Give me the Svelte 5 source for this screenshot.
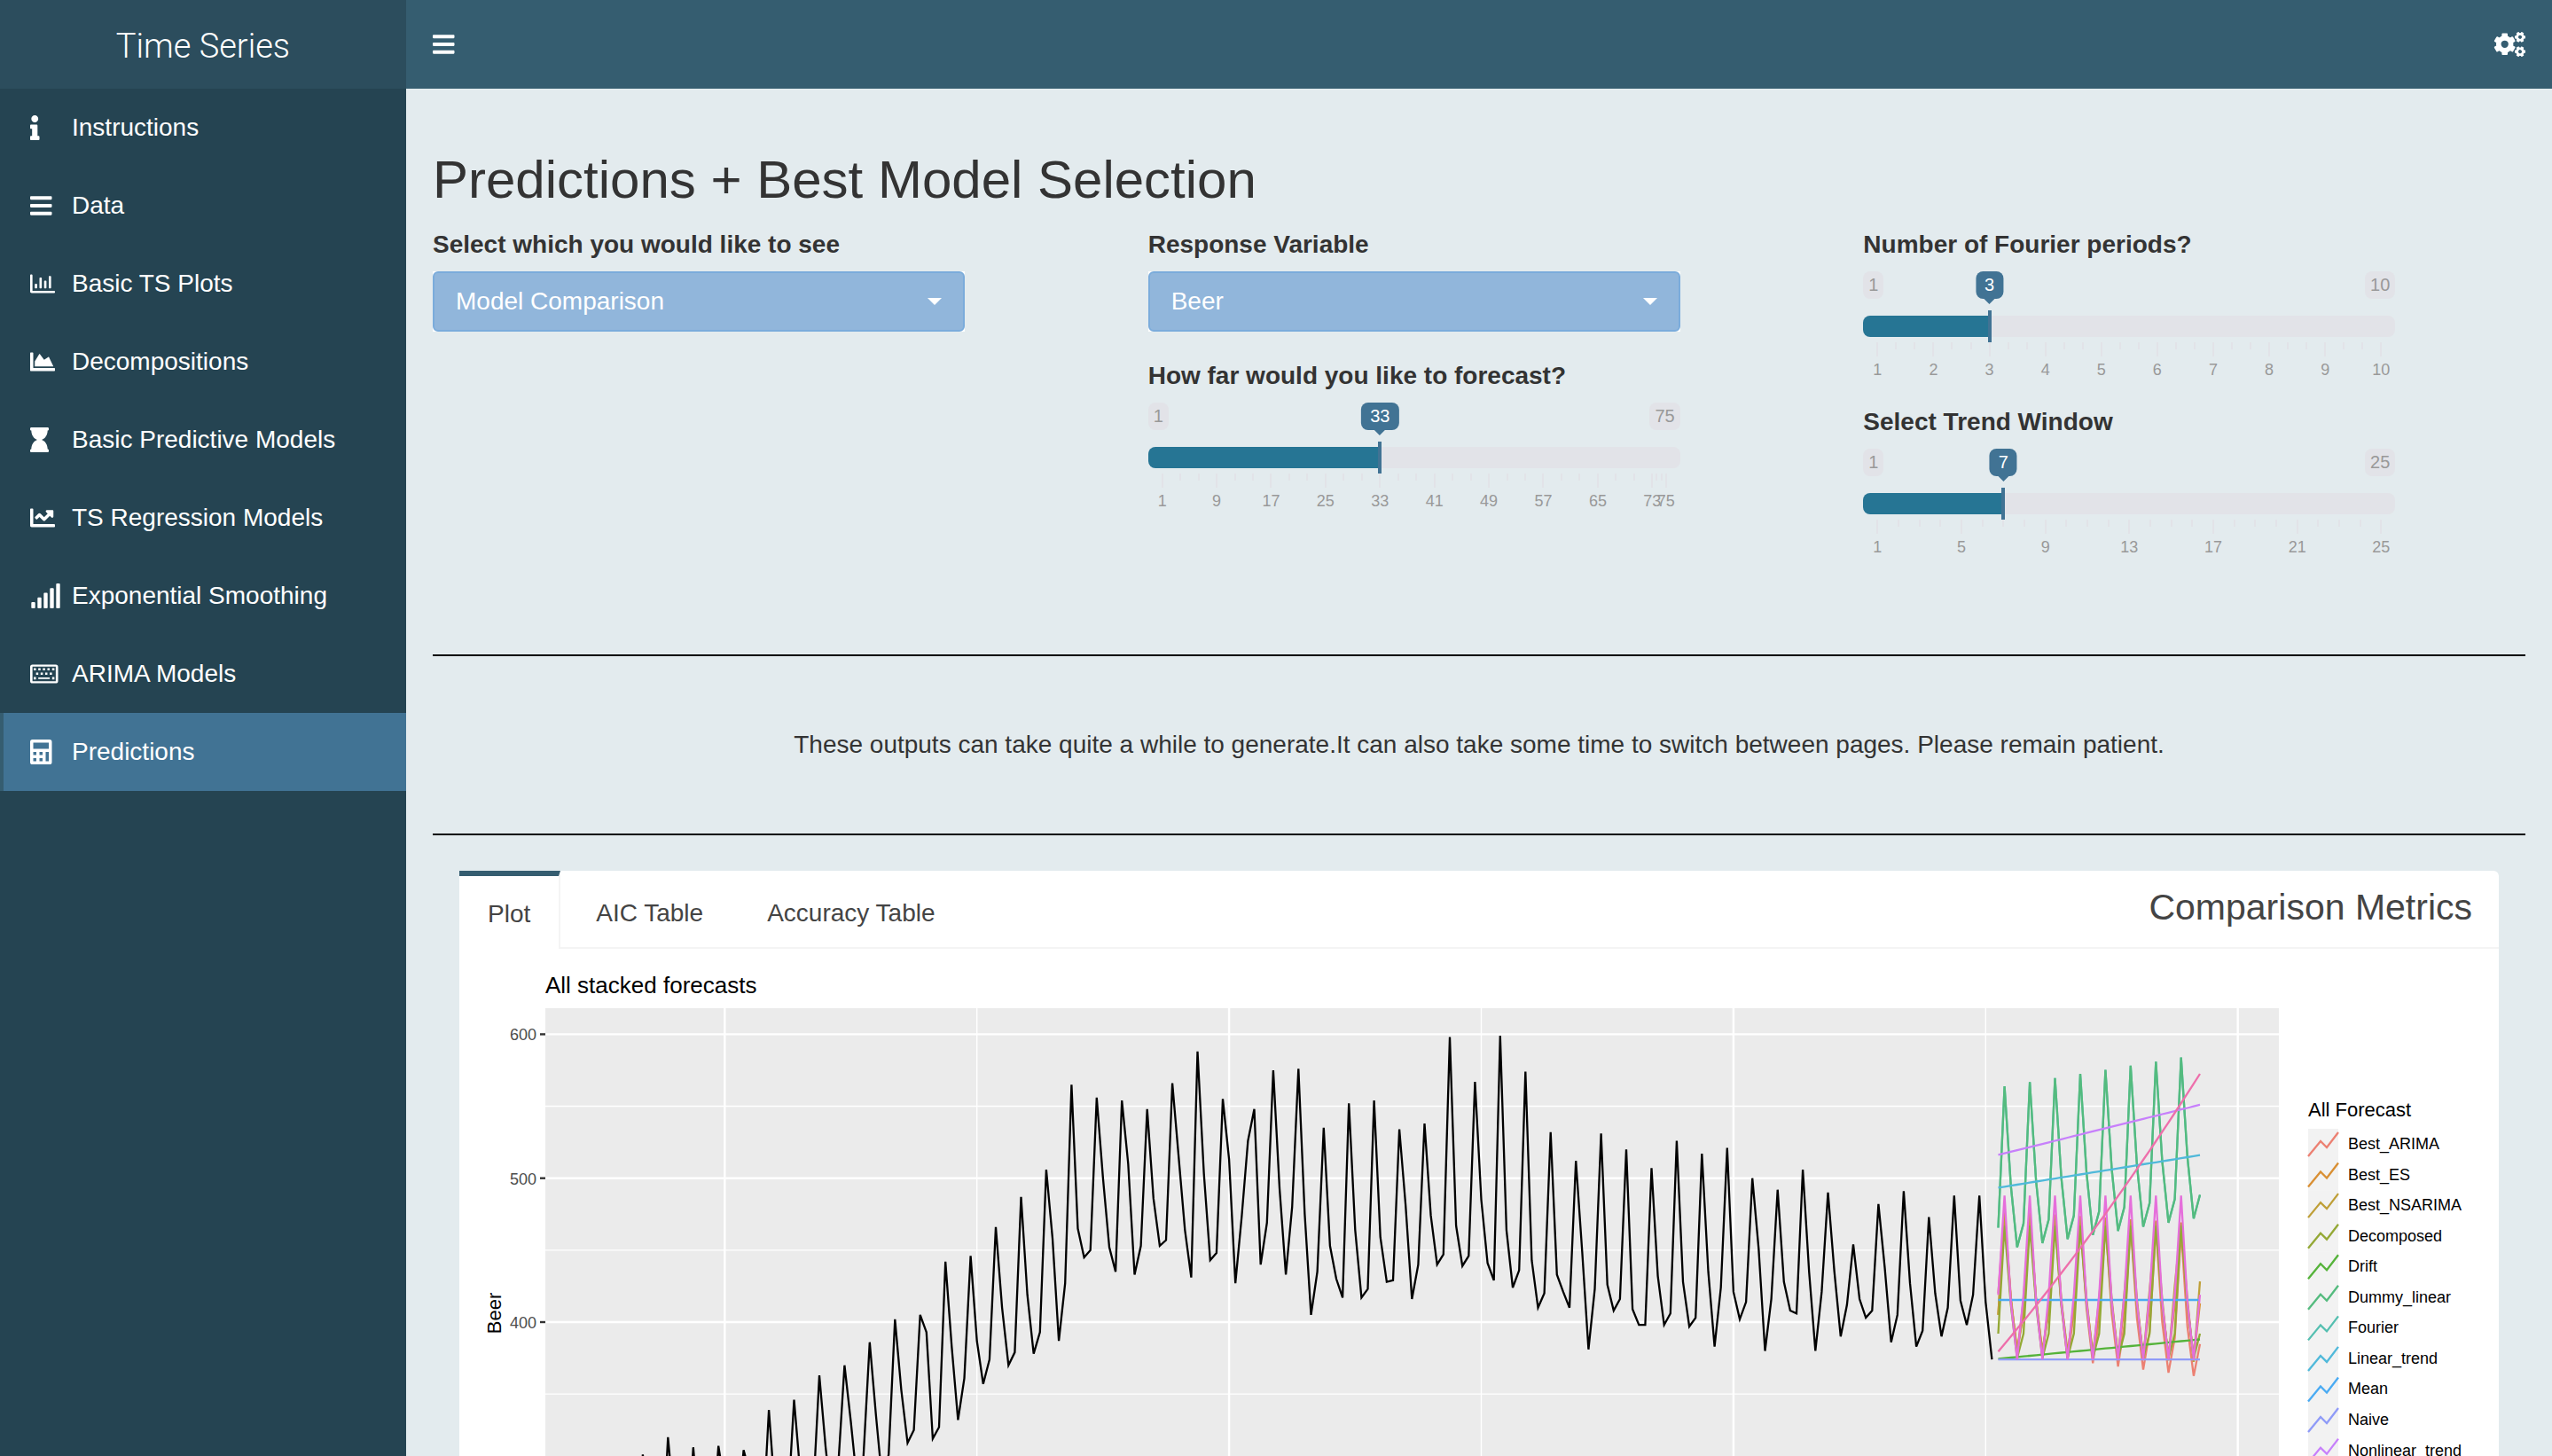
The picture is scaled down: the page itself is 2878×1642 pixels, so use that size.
<script>
  const icons = {
    info: { w: 192, d: 'M20 424.229h20V279.771H20c-11.046 0-20-8.954-20-20V212c0-11.046 8.954-20 20-20h112c11.046 0 20 8.954 20 20v212.229h20c11.046 0 20 8.954 20 20V492c0 11.046-8.954 20-20 20H20c-11.046 0-20-8.954-20-20v-47.771c0-11.046 8.954-20 20-20zM96 0C56.235 0 24 32.235 24 72s32.235 72 72 72 72-32.235 72-72S135.764 0 96 0z' },
    bars: { w: 448, d: 'M16 132h416c8.837 0 16-7.163 16-16V76c0-8.837-7.163-16-16-16H16C7.163 60 0 67.163 0 76v40c0 8.837 7.163 16 16 16zm0 160h416c8.837 0 16-7.163 16-16v-40c0-8.837-7.163-16-16-16H16c-8.837 0-16 7.163-16 16v40c0 8.837 7.163 16 16 16zm0 160h416c8.837 0 16-7.163 16-16v-40c0-8.837-7.163-16-16-16H16c-8.837 0-16 7.163-16 16v40c0 8.837 7.163 16 16 16z' },
    chartBar: { w: 512, d: 'M396.8 352h22.4c6.4 0 12.8-6.4 12.8-12.8V108.8c0-6.4-6.4-12.8-12.8-12.8h-22.4c-6.4 0-12.8 6.4-12.8 12.8v230.4c0 6.4 6.4 12.8 12.8 12.8zm-192 0h22.4c6.4 0 12.8-6.4 12.8-12.8V140.8c0-6.4-6.4-12.8-12.8-12.8h-22.4c-6.4 0-12.8 6.4-12.8 12.8v198.4c0 6.4 6.4 12.8 12.8 12.8zm96 0h22.4c6.4 0 12.8-6.4 12.8-12.8V204.8c0-6.4-6.4-12.8-12.8-12.8h-22.4c-6.4 0-12.8 6.4-12.8 12.8v134.4c0 6.4 6.4 12.8 12.8 12.8zM496 400H48V80c0-8.84-7.16-16-16-16H16C7.16 64 0 71.16 0 80v336c0 17.67 14.33 32 32 32h464c8.84 0 16-7.16 16-16v-16c0-8.84-7.16-16-16-16zm-387.2-48h22.4c6.4 0 12.8-6.4 12.8-12.8v-70.4c0-6.4-6.4-12.8-12.8-12.8h-22.4c-6.4 0-12.8 6.4-12.8 12.8v70.4c0 6.4 6.4 12.8 12.8 12.8z' },
    chartArea: { w: 512, d: 'M500 384c6.6 0 12 5.4 12 12v40c0 6.6-5.4 12-12 12H12c-6.6 0-12-5.4-12-12V76c0-6.6 5.4-12 12-12h40c6.6 0 12 5.4 12 12v308h436zM372.7 159.5L288 216l-85.3-113.7c-5.1-6.8-15.5-6.3-19.9 1L96 248v104h384l-89.9-187.8c-3.2-6.5-11.4-8.7-17.4-4.7z' },
    hourglass: { w: 384, d: 'M360 64c13.255 0 24-10.745 24-24V24c0-13.255-10.745-24-24-24H24C10.745 0 0 10.745 0 24v16c0 13.255 10.745 24 24 24 0 90.965 51.016 167.734 120.842 192C75.016 280.266 24 357.035 24 448c-13.255 0-24 10.745-24 24v16c0 13.255 10.745 24 24 24h336c13.255 0 24-10.745 24-24v-16c0-13.255-10.745-24-24-24 0-90.965-51.016-167.734-120.842-192C308.984 231.734 360 154.965 360 64z' },
    chartLine: { w: 512, d: 'M496 384H64V80c0-8.84-7.16-16-16-16H16C7.16 64 0 71.16 0 80v336c0 17.67 14.33 32 32 32h464c8.84 0 16-7.16 16-16v-32c0-8.84-7.16-16-16-16zM464 96H345.94c-21.38 0-32.09 25.85-16.97 40.97l32.4 32.4L288 242.75l-73.37-73.37c-12.5-12.5-32.76-12.5-45.25 0l-68.69 68.69c-6.25 6.25-6.25 16.38 0 22.63l22.62 22.62c6.25 6.25 16.38 6.25 22.63 0L192 237.25l73.37 73.37c12.5 12.5 32.76 12.5 45.25 0l96-96 32.4 32.4c15.12 15.12 40.97 4.41 40.97-16.97V112c.01-8.84-7.15-16-15.99-16z' },
    signal: { w: 640, d: 'M216 288h-48c-8.84 0-16 7.16-16 16v192c0 8.84 7.16 16 16 16h48c8.84 0 16-7.16 16-16V304c0-8.84-7.16-16-16-16zM88 384H40c-8.84 0-16 7.16-16 16v96c0 8.84 7.16 16 16 16h48c8.84 0 16-7.16 16-16v-96c0-8.84-7.16-16-16-16zm256-192h-48c-8.84 0-16 7.16-16 16v288c0 8.84 7.16 16 16 16h48c8.84 0 16-7.16 16-16V208c0-8.84-7.16-16-16-16zm128-96h-48c-8.84 0-16 7.16-16 16v384c0 8.84 7.16 16 16 16h48c8.84 0 16-7.16 16-16V112c0-8.84-7.16-16-16-16zM600 0h-48c-8.84 0-16 7.16-16 16v480c0 8.84 7.16 16 16 16h48c8.84 0 16-7.16 16-16V16c0-8.84-7.16-16-16-16z' },
    keyboard: { w: 576, d: 'M48 64h480a48 48 0 0 1 48 48v288a48 48 0 0 1-48 48H48a48 48 0 0 1-48-48V112a48 48 0 0 1 48-48zM48 104v304h480V104zM74 138h46v46H74zM168 138h46v46h-46zM262 138h46v46h-46zM356 138h46v46h-46zM454 138h46v46h-46zM122 230h46v46h-46zM216 230h46v46h-46zM310 230h46v46h-46zM404 230h46v46h-46zM74 322h46v46H74zM168 330h236v32H168zM454 322h46v46h-46z' },
    calculator: { w: 448, d: 'M48 0h352a48 48 0 0 1 48 48v416a48 48 0 0 1-48 48H48a48 48 0 0 1-48-48V48A48 48 0 0 1 48 0zM64 64v128h320V64zM64 256v64h64v-64zM192 256v64h64v-64zM320 256v192h64V256zM64 384v64h64v-64zM192 384v64h64v-64z' }
  };

  const menu = [
    { label: 'Instructions', icon: 'info' },
    { label: 'Data', icon: 'bars' },
    { label: 'Basic TS Plots', icon: 'chartBar' },
    { label: 'Decompositions', icon: 'chartArea' },
    { label: 'Basic Predictive Models', icon: 'hourglass' },
    { label: 'TS Regression Models', icon: 'chartLine' },
    { label: 'Exponential Smoothing', icon: 'signal' },
    { label: 'ARIMA Models', icon: 'keyboard' },
    { label: 'Predictions', icon: 'calculator', active: true }
  ];

  let horizon = $state(33);
  let periods = $state(3);
  let trend = $state(7);

  // Major marks every `step`, the last one on `max`, with `minor` short ticks between.
  function marks(min, max, step, minor) {
    const majors = [];
    for (let v = min; v < max; v += step) majors.push(v);
    majors.push(max);
    const minors = [];
    for (let i = 0; i < majors.length - 1; i++) {
      const gap = (majors[i + 1] - majors[i]) / (minor + 1);
      for (let k = 1; k <= minor; k++) minors.push(majors[i] + gap * k);
    }
    return { majors, minors };
  }
  const pct = (v, min, max) => ((v - min) / (max - min)) * 100;

  // Quarterly beer production from 1956 Q1.
  const beer = [
    284, 213, 227, 308, 262, 228, 236, 320, 272, 233, 237, 313, 261, 227, 250, 314, 286, 227, 260, 311,
    295, 233, 257, 339, 279, 250, 270, 346, 294, 255, 278, 363, 313, 273, 300, 370, 331, 288, 306, 386,
    335, 288, 308, 402, 353, 316, 325, 405, 393, 319, 327, 442, 383, 332, 361, 446, 387, 357, 374, 466,
    410, 370, 379, 487, 419, 378, 393, 506, 458, 387, 427, 565, 465, 445, 450, 556, 500, 452, 435, 554,
    510, 433, 453, 548, 486, 453, 457, 566, 515, 464, 431, 588, 503, 443, 448, 555, 513, 427, 473, 526,
    548, 440, 469, 575, 493, 433, 480, 576, 475, 405, 435, 535, 453, 430, 417, 552, 464, 417, 423, 554,
    459, 428, 429, 534, 481, 416, 440, 538, 474, 440, 447, 598, 467, 439, 446, 567, 485, 441, 429, 599,
    464, 424, 436, 574, 443, 410, 420, 532, 433, 421, 410, 512, 449, 381, 423, 531, 426, 408, 416, 520,
    409, 398, 398, 507, 432, 398, 406, 526, 428, 397, 403, 517, 435, 383, 424, 521, 421, 402, 414, 500,
    451, 380, 416, 492, 428, 408, 406, 506, 435, 380, 421, 490, 435, 390, 412, 454, 416, 403, 408, 482,
    438, 386, 405, 491, 427, 383, 394, 473, 420, 390, 410, 488, 415, 398, 419, 488, 414, 374
  ];

  const px = (year) => 279.3 + (year - 1960) * 28.44;
  const py = (value) => 401 - (value - 400) * 1.623;
  const path = (values, start) =>
    values.map((v, i) => `${px(start + i / 4).toFixed(1)},${py(v).toFixed(1)}`).join(' ');

  const quarters = Array.from({ length: 33 }, (_, i) => i);
  const seasonal = (base, perYear) => quarters.map((i) => base[i % 4] + perYear[i % 4] * Math.floor(i / 4));
  const line = (a, b) => quarters.map((i) => a + ((b - a) * i) / 32);

  const forecasts = [
    { color: '#ec8072', values: seasonal([420, 478, 418, 378], [-4.4, -2, -3, -2.2]) },
    { color: '#d98f33', values: seasonal([405, 477, 415, 381], [1, -1.1, -0.5, -0.9]) },
    { color: '#bf9f37', values: seasonal([405, 474, 416, 378], [2.9, -0.8, 0, -0.8]) },
    { color: '#94a835', values: seasonal([392, 467, 412, 375], [0, 0, 0, 0]) },
    { color: '#55b33a', values: line(374.5, 388) },
    { color: '#54bfb0', values: seasonal([465.6, 563.9, 495, 452], [2.85, 2.85, 2.85, 2.85]) },
    { color: '#54bb7e', values: seasonal([465.6, 563.9, 495, 452], [2.85, 2.85, 2.85, 2.85]) },
    { color: '#50b9da', values: line(493.4, 516) },
    { color: '#4aabf3', values: line(415.4, 415.4) },
    { color: '#8f9bf8', values: line(374, 374) },
    { color: '#c780fb', values: line(516.2, 551) },
    { color: '#e56fdb', values: seasonal([419, 488, 414, 374], [0, 0, 0, 0]) },
    { color: '#ee6fab', values: quarters.map((i) => 379.5 + 166 * (i / 32) + 27 * (i / 32) ** 2) }
  ];

  const legend = [
    ['Best_ARIMA', '#ec8072'], ['Best_ES', '#d98f33'], ['Best_NSARIMA', '#bf9f37'],
    ['Decomposed', '#94a835'], ['Drift', '#55b33a'], ['Dummy_linear', '#54bb7e'],
    ['Fourier', '#54bfb0'], ['Linear_trend', '#50b9da'], ['Mean', '#4aabf3'],
    ['Naive', '#8f9bf8'], ['Nonlinear_trend', '#c780fb']
  ];
</script>

{#snippet icon(name)}
  <svg class="icon" viewBox="0 0 {icons[name].w} 512" aria-hidden="true">
    <path fill-rule="evenodd" d={icons[name].d} />
  </svg>
{/snippet}

{#snippet slider(id, label, min, max, step, minor, value, update)}
  {@const m = marks(min, max, step, minor)}
  <div class="group">
    <label for={id}>{label}</label>
    <div class="slider">
      <div class="limits"><span>{min}</span><span>{max}</span></div>
      <div class="track"><div class="fill" style:width="calc(16px + (100% - 32px) * {pct(value, min, max) / 100})"></div></div>
      <div class="scale">
        <span class="bubble" style:left="{pct(value, min, max)}%">{value}</span>
        <span class="handle" style:left="{pct(value, min, max)}%"></span>
        {#each m.minors as v}<i class="tick" style:left="{pct(v, min, max)}%"></i>{/each}
        {#each m.majors as v}
          <i class="tick major" style:left="{pct(v, min, max)}%"></i>
          <span class="mark" style:left="{pct(v, min, max)}%">{v}</span>
        {/each}
      </div>
      <input {id} type="range" {min} {max} {value} oninput={(e) => update(+e.currentTarget.value)} />
    </div>
  </div>
{/snippet}

{#snippet gear(x, y, r, turn)}
  <g transform="translate({x} {y}) rotate({turn})">
    <circle r={r * 0.57} fill="none" stroke="#fff" stroke-width={r * 0.46} />
    {#each [0, 60, 120, 180, 240, 300] as a}
      <rect x={-r * 0.27} y={-r} width={r * 0.54} height={r * 0.42} rx={r * 0.08} transform="rotate({a})" />
    {/each}
  </g>
{/snippet}

<div class="app">
  <a class="logo" href="#top">Time Series</a>
  <header class="topbar">
    <button aria-label="Toggle navigation">{@render icon('bars')}</button>
    <button aria-label="Settings">
      <svg class="gears" viewBox="0 0 36 28" aria-hidden="true">
        {@render gear(12.7, 13.8, 12.2, 0)}
        {@render gear(30, 5.8, 6, 30)}
        {@render gear(30, 22.2, 6, 30)}
      </svg>
    </button>
  </header>

  <nav class="sidebar">
    {#each menu as item}
      <a href="#{item.icon}" class:active={item.active}>
        <span class="slot">{@render icon(item.icon)}</span>{item.label}
      </a>
    {/each}
  </nav>

  <main>
    <h2>Predictions + Best Model Selection</h2>
    <div class="controls">
      <div class="col">
        <div class="group">
          <label for="view">Select which you would like to see</label>
          <div class="picker">
            <select id="view"><option>Model Comparison</option></select>
            <svg viewBox="0 0 16 8" aria-hidden="true"><path d="M0 0h16l-8 8z" /></svg>
          </div>
        </div>
      </div>
      <div class="col">
        <div class="group">
          <label for="response">Response Variable</label>
          <div class="picker">
            <select id="response"><option>Beer</option></select>
            <svg viewBox="0 0 16 8" aria-hidden="true"><path d="M0 0h16l-8 8z" /></svg>
          </div>
        </div>
        {@render slider('horizon', 'How far would you like to forecast?', 1, 75, 8, 2, horizon, (v) => (horizon = v))}
      </div>
      <div class="col">
        {@render slider('periods', 'Number of Fourier periods?', 1, 10, 1, 2, periods, (v) => (periods = v))}
        {@render slider('trend', 'Select Trend Window', 1, 25, 4, 3, trend, (v) => (trend = v))}
      </div>
    </div>

    <hr />
    <p class="note">These outputs can take quite a while to generate.It can also take some time to switch between pages. Please remain patient.</p>
    <hr />

    <section class="box">
      <div class="tabs">
        <button class="tab current">Plot</button>
        <button class="tab">AIC Table</button>
        <button class="tab">Accuracy Table</button>
        <h3>Comparison Metrics</h3>
      </div>
      <div class="plot">
        <svg viewBox="0 0 2260 800" role="img" aria-label="All stacked forecasts">
          <text class="title" x="77" y="30">All stacked forecasts</text>
          <rect x="77" y="47" width="1955" height="673" fill="#ebebeb" />
          {#each [550, 450, 350, 250] as v}
            <line class="minor" x1="77" x2="2032" y1={py(v)} y2={py(v)} />
          {/each}
          {#each [1970, 1990, 2010] as t}
            <line class="minor" x1={px(t)} x2={px(t)} y1="47" y2="720" />
          {/each}
          {#each [600, 500, 400] as v}
            <line class="majorgrid" x1="77" x2="2032" y1={py(v)} y2={py(v)} />
            <line class="dash" x1="71" x2="77" y1={py(v)} y2={py(v)} />
            <text class="axis" x="67" y={py(v) + 7}>{v}</text>
          {/each}
          {#each [1960, 1980, 2000, 2020] as t}
            <line class="majorgrid" x1={px(t)} x2={px(t)} y1="47" y2="720" />
          {/each}
          <text class="ylab" transform="translate(27 391) rotate(-90)">Beer</text>
          <polyline class="series" stroke="#000" points={path(beer, 1956)} />
          {#each forecasts as f}
            <polyline class="series" stroke={f.color} points={path(f.values, 2010.5)} />
          {/each}

          <text class="legend-title" x="2065" y="169">All Forecast</text>
          {#each legend as [name, color], i}
            <g transform="translate(2065 {183 + i * 34.56})">
              <rect width="34" height="35" fill="#f2f2f2" />
              <polyline class="series" stroke={color} points="0,31 14,14 21,21 34,4" />
              <text class="legend-text" x="45" y="23">{name}</text>
            </g>
          {/each}
        </svg>
      </div>
    </section>
  </main>
</div>

<style>
  :global(body) {
    margin: 0;
    font: 28px/40px "Liberation Sans", Arial, sans-serif;
    color: #333;
  }
  .app {
    display: grid;
    grid-template: 100px minmax(0, 1fr) / 458px minmax(0, 1fr);
    height: 100vh;
    background: #e3ebee;
  }
  button {
    font: inherit;
    border: 0;
    background: none;
    padding: 0;
    cursor: pointer;
  }
  a {
    color: #fff;
    text-decoration: none;
  }
  .logo {
    background: #2c4d5d;
    font: 300 38px/96px Roboto, "Liberation Sans", sans-serif;
    padding-top: 4px;
    text-align: center;
  }
  .topbar {
    background: #355d70;
    display: flex;
    align-items: center;
    justify-content: space-between;
    padding: 0 30px;
  }
  .topbar button {
    display: flex;
  }
  .icon {
    height: 28px;
    display: block;
    fill: #fff;
  }
  .gears {
    width: 36px;
    height: 28px;
    fill: #fff;
  }
  .sidebar {
    background: #254452;
  }
  .sidebar a {
    display: flex;
    align-items: center;
    height: 88px;
    box-sizing: border-box;
    padding-left: 30px;
    border-left: 4px solid transparent;
  }
  .sidebar a.active {
    background: #417394;
    border-left-color: #355d70;
  }
  .slot {
    width: 47px;
  }
  main {
    padding: 30px;
    overflow-y: auto;
    scrollbar-width: none;
  }
  h2 {
    margin: 40px 0 20px;
    font-size: 60px;
    line-height: 66px;
    font-weight: 400;
  }
  .controls {
    display: grid;
    grid-template-columns: repeat(3, minmax(0, 1fr));
    margin: 0 -30px;
  }
  .col {
    padding: 0 30px;
  }
  .group {
    max-width: 600px;
    margin-bottom: 30px;
  }
  label {
    display: block;
    font-weight: 700;
    margin-bottom: 10px;
  }
  .picker {
    position: relative;
    background: #fff;
  }
  .picker svg {
    position: absolute;
    right: 26px;
    top: 30px;
    width: 16px;
    height: 8px;
    fill: #fff;
    pointer-events: none;
  }
  select {
    appearance: none;
    display: block;
    width: 100%;
    height: 68px;
    padding: 0 60px 0 24px;
    border: 2px solid #7bacdb;
    border-radius: 6px;
    background: #91b6db;
    color: #fff;
    font: inherit;
  }
  .slider {
    position: relative;
    height: 120px;
  }
  .limits {
    display: flex;
    justify-content: space-between;
    height: 50px;
    align-items: flex-start;
  }
  .limits span,
  .bubble {
    font-size: 20px;
    line-height: 31px;
    height: 31px;
    border-radius: 8px;
  }
  .limits span {
    background: #e2e3e8;
    color: #999;
    padding: 0 6px;
  }
  .track {
    height: 24px;
    border-radius: 8px;
    background: #e2e3e8;
    overflow: hidden;
  }
  .fill {
    height: 100%;
    background: #267594;
  }
  .scale {
    position: absolute;
    inset: 0 16px;
  }
  .scale > * {
    position: absolute;
    transform: translateX(-50%);
  }
  .bubble {
    top: 0;
    padding: 0 10px;
    background: #417394;
    color: #fff;
  }
  .bubble::after {
    content: "";
    position: absolute;
    top: 100%;
    left: 50%;
    margin-left: -6px;
    border: 6px solid transparent;
    border-top-color: #417394;
    border-bottom: 0;
  }
  .handle {
    top: 44px;
    width: 4px;
    height: 36px;
    background: #417394;
  }
  .tick {
    top: 80px;
    width: 2px;
    height: 8px;
    background: #e2e3e8;
  }
  .tick.major {
    height: 16px;
  }
  .mark {
    top: 101px;
    font-size: 18px;
    line-height: 20px;
    color: #999;
  }
  input[type='range'] {
    position: absolute;
    inset: 40px 0 36px;
    width: 100%;
    margin: 0;
    opacity: 0;
    cursor: pointer;
  }
  hr {
    margin: 40px 0;
    border: 0;
    border-top: 2px solid #000;
  }
  .controls + hr {
    margin-top: 82px;
  }
  .note {
    margin: 0;
    padding: 40px 0;
    text-align: center;
  }
  .box {
    margin: 0 30px;
    background: #fff;
    border-radius: 6px;
  }
  .tabs {
    display: flex;
    gap: 8px;
    border-bottom: 2px solid #f4f4f4;
  }
  .tab {
    border: 2px solid transparent;
    border-width: 6px 2px 0;
    padding: 22px 30px 18px;
    color: #444;
  }
  .tab.current {
    background: #fff;
    border-top-color: #355d70;
    border-right-color: #f4f4f4;
    border-left-width: 0;
    padding: 22px 32px 18px;
    margin-bottom: -2px;
  }
  h3 {
    margin: 0 30px 0 auto;
    font-size: 41px;
    font-weight: 400;
    line-height: 82px;
    color: #444;
  }
  .plot {
    padding: 20px;
  }
  .plot svg {
    display: block;
    width: 100%;
  }
  .minor {
    stroke: #fff;
    stroke-width: 1.4;
  }
  .majorgrid {
    stroke: #fff;
    stroke-width: 2.4;
  }
  .dash {
    stroke: #333;
    stroke-width: 2.4;
  }
  .series {
    fill: none;
    stroke-width: 2.3;
  }
  .title {
    font-size: 26px;
  }
  .axis {
    font-size: 18px;
    text-anchor: end;
    fill: #4d4d4d;
  }
  .ylab {
    font-size: 22px;
    text-anchor: middle;
  }
  .legend-title {
    font-size: 22px;
  }
  .legend-text {
    font-size: 18px;
  }
</style>
